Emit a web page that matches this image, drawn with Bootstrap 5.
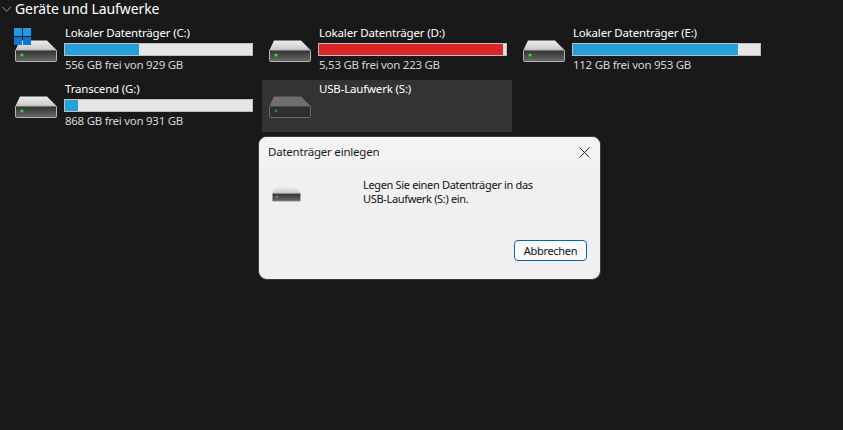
<!DOCTYPE html>
<html lang="de">
<head>
    <meta charset="UTF-8">
    <meta name="viewport" content="width=device-width, initial-scale=1.0">
    <title>Geräte und Laufwerke</title>
    <link href="https://cdn.jsdelivr.net/npm/bootstrap@5.3.0/dist/css/bootstrap.min.css" rel="stylesheet">
    <style>
        html, body { height: 100%; }
        body {
            background: #191919;
            color: #fff;
            font-family: "Noto Sans", "Liberation Sans", sans-serif;
            font-size: 11.5px;
            letter-spacing: -0.18px;
            overflow: hidden;
            position: relative;
        }
        .group-head {
            height: 24px;
            padding-left: 2px;
            font-size: 14px;
            letter-spacing: -0.1px;
            line-height: 17px;
            gap: 3px;
        }
        .group-head svg { margin-top: 4px; }
        .drive-grid {
            display: grid;
            grid-template-columns: repeat(3, 250px);
            grid-auto-rows: 52px;
            gap: 4px;
            padding-left: 8px;
        }
        .drive-tile {
            position: relative;
            padding-left: 7px;
            gap: 7px;
        }
        .drive-tile.picked { background: #333; }
        .drive-pic { width: 42px; height: 22px; margin-top: 16px; flex: none; }
        .drive-info { width: 189px; }
        .drive-name { height: 19px; line-height: 18px; padding-left: 1px; color: #fff; }
        .drive-sub { line-height: 18px; padding-left: 1px; color: #d6d6d6; letter-spacing: -0.27px; }
        .disk-bar {
            height: 13px;
            background: #e6e6e6;
            border: 1px solid #bcbcbc;
        }
        .disk-fill { height: 100%; background: #26a0da; }
        .disk-fill.full { background: #da2626; }
        .win-logo {
            position: absolute;
            left: 6px;
            top: 4px;
            width: 17px;
            height: 17px;
        }
        .insert-dialog {
            position: absolute;
            left: 258px;
            top: 136px;
            width: 343px;
            height: 144px;
            background: #f0f0f0;
            color: #1a1a1a;
            border: 1px solid #3a3a3a;
            border-radius: 9px;
            overflow: hidden;
        }
        .dialog-title {
            height: 30px;
            background: #f3f3f3;
            padding: 0 10px 0 9px;
            line-height: 28px;
            letter-spacing: -0.22px;
        }
        .dialog-body { padding: 19px 0 0 13px; height: 73px; }
        .dialog-body svg { width: 29px; height: 16px; flex: none; }
        .dialog-text {
            margin-left: 62px;
            margin-top: -8px;
            font-size: 11px;
            line-height: 14px;
            letter-spacing: -0.33px;
            color: #111;
        }
        .dialog-foot { padding-right: 13px; }
        .cancel-btn {
            width: 73px;
            height: 21px;
            padding: 0;
            font-size: 11px;
            line-height: 18px;
            letter-spacing: -0.3px;
            color: #111;
            background: #fbfbfb;
            border: 1px solid #0067c0;
            border-radius: 4px;
        }
    </style>
</head>
<body>
    <svg width="0" height="0" class="position-absolute">
        <defs>
            <linearGradient id="driveBody" x1="0" y1="0" x2="0" y2="1">
                <stop offset="0" stop-color="#303030"/>
                <stop offset="1" stop-color="#6a6a6a"/>
            </linearGradient>
            <linearGradient id="driveTop" x1="0" y1="0" x2="0" y2="1">
                <stop offset="0" stop-color="#ededed"/>
                <stop offset="1" stop-color="#c9c9c9"/>
            </linearGradient>
            <symbol id="drive" viewBox="0 0 42 22">
                <path d="M5 0.5H32L41.5 10H0.5Z" fill="url(#driveTop)"/>
                <rect x="0.5" y="10" width="41" height="11.5" rx="1" fill="url(#driveBody)" stroke="#b5b5b5"/>
                <circle cx="7" cy="15" r="1.6" fill="#2fdc3a"/>
            </symbol>
            <symbol id="driveDim" viewBox="0 0 42 22">
                <path d="M5 0.5H32L41.5 10H0.5Z" fill="#6f6f6f"/>
                <rect x="0.5" y="10" width="41" height="11.5" rx="1" fill="#2e2e2e" stroke="#6b6b6b"/>
                <circle cx="7" cy="15" r="1.4" fill="#1f9a28"/>
            </symbol>
        </defs>
    </svg>

    <div class="group-head d-flex align-items-start">
        <svg width="10" height="10" viewBox="0 0 10 10"><path d="M0.5 3L4.75 7.25L9 3" fill="none" stroke="#9a9a9a"/></svg>
        <span>Geräte und Laufwerke</span>
    </div>

    <div class="drive-grid">
        <div class="drive-tile d-flex">
            <svg class="drive-pic"><use href="#drive"/></svg>
            <svg class="win-logo" viewBox="0 0 17 17">
                <rect width="8" height="8" fill="#1e9be8"/>
                <rect x="9" width="8" height="8" fill="#1e9be8"/>
                <rect y="9" width="8" height="8" fill="#0a78d4"/>
                <rect x="9" y="9" width="8" height="8" fill="#0a78d4"/>
            </svg>
            <div class="drive-info">
                <div class="drive-name">Lokaler Datenträger (C:)</div>
                <div class="disk-bar"><div class="disk-fill" style="width: 39.6%"></div></div>
                <div class="drive-sub">556 GB frei von 929 GB</div>
            </div>
        </div>
        <div class="drive-tile d-flex">
            <svg class="drive-pic"><use href="#drive"/></svg>
            <div class="drive-info">
                <div class="drive-name">Lokaler Datenträger (D:)</div>
                <div class="disk-bar"><div class="disk-fill full" style="width: 98.2%"></div></div>
                <div class="drive-sub">5,53 GB frei von 223 GB</div>
            </div>
        </div>
        <div class="drive-tile d-flex">
            <svg class="drive-pic"><use href="#drive"/></svg>
            <div class="drive-info">
                <div class="drive-name">Lokaler Datenträger (E:)</div>
                <div class="disk-bar"><div class="disk-fill" style="width: 88.2%"></div></div>
                <div class="drive-sub">112 GB frei von 953 GB</div>
            </div>
        </div>
        <div class="drive-tile d-flex">
            <svg class="drive-pic"><use href="#drive"/></svg>
            <div class="drive-info">
                <div class="drive-name">Transcend (G:)</div>
                <div class="disk-bar"><div class="disk-fill" style="width: 7%"></div></div>
                <div class="drive-sub">868 GB frei von 931 GB</div>
            </div>
        </div>
        <div class="drive-tile picked d-flex">
            <svg class="drive-pic"><use href="#driveDim"/></svg>
            <div class="drive-info">
                <div class="drive-name">USB-Laufwerk (S:)</div>
            </div>
        </div>
    </div>

    <div class="insert-dialog">
        <div class="dialog-title d-flex justify-content-between align-items-center">
            <span>Datenträger einlegen</span>
            <svg width="11" height="11" viewBox="0 0 11 11"><path d="M0.5 0.5L10.5 10.5M10.5 0.5L0.5 10.5" stroke="#222" fill="none"/></svg>
        </div>
        <div class="dialog-body d-flex">
            <svg><use href="#drive"/></svg>
            <div class="dialog-text">Legen Sie einen Datenträger in das<br>USB-Laufwerk (S:) ein.</div>
        </div>
        <div class="dialog-foot d-flex justify-content-end">
            <button type="button" class="btn cancel-btn">Abbrechen</button>
        </div>
    </div>

    <script src="https://cdn.jsdelivr.net/npm/bootstrap@5.3.0/dist/js/bootstrap.bundle.min.js"></script>
</body>
</html>
